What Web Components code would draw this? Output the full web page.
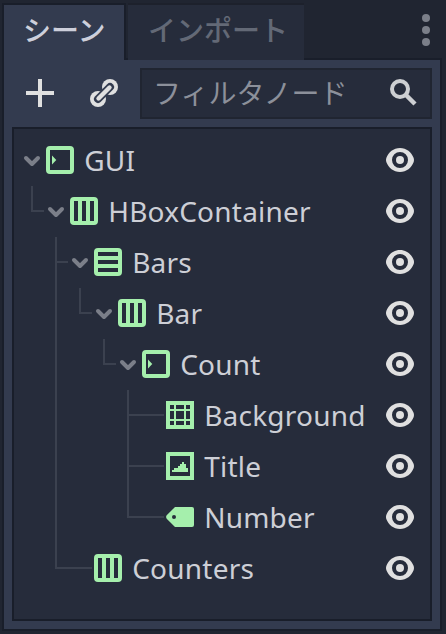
<!DOCTYPE html>
<html lang="ja">
<head>
<meta charset="utf-8">
<title>シーン</title>
<style>
html, body { margin: 0; height: 100%; background: #202531; }
body { font: 28px/1 "Noto Sans", "Noto Sans CJK JP", sans-serif; color: #cdcfd6; overflow: hidden; }
</style>
</head>
<body>
<scene-dock>
  <dock-tab slot="tabs" active>シーン</dock-tab>
  <dock-tab slot="tabs">インポート</dock-tab>
  <dock-icon slot="menu" name="menu"></dock-icon>
  <dock-icon slot="tools" name="add"></dock-icon>
  <dock-icon slot="tools" name="link"></dock-icon>
  <filter-box slot="tools">フィルタノード</filter-box>
  <tree-node label="GUI" icon="control" open root>
    <tree-node label="HBoxContainer" icon="hbox" open last>
      <tree-node label="Bars" icon="vbox" open>
        <tree-node label="Bar" icon="hbox" open last>
          <tree-node label="Count" icon="control" open last>
            <tree-node label="Background" icon="patch"></tree-node>
            <tree-node label="Title" icon="texture"></tree-node>
            <tree-node label="Number" icon="label" last></tree-node>
          </tree-node>
        </tree-node>
      </tree-node>
      <tree-node label="Counters" icon="hbox" last></tree-node>
    </tree-node>
  </tree-node>
</scene-dock>
<script>
const box = '<path fill="#a5efac" fill-rule="evenodd" d="M6 2h20a4 4 0 0 1 4 4v20a4 4 0 0 1-4 4H6a4 4 0 0 1-4-4V6a4 4 0 0 1 4-4z';
const ICONS = {
  control: box + 'M6 6v20h20V6z"/><path fill="#a5efac" d="M8 11.500l4.300 4.500L8 20.500z"/>',
  hbox: box + 'M6 6v20h4V6zM14 6v20h4V6zM22 6v20h4V6z"/>',
  vbox: box + 'M6 6v4h20V6zM6 14v4h20v-4zM6 22v4h20v-4z"/>',
  patch: '<path fill="#a5efac" fill-rule="evenodd" d="M2 2h28v28H2zM6 6v4h4V6zM12 6v4h8V6zM22 6v4h4V6zM6 12v8h4v-8zM12 12v8h8v-8zM22 12v8h4v-8zM6 22v4h4v-4zM12 22v4h8v-4zM22 22v4h4v-4z"/>',
  texture: '<path fill="#a5efac" fill-rule="evenodd" d="M2 2h28v28H2zM6 6v20h20V6z"/><path fill="#a5efac" d="M8 22v-2h2v-2h4v-2h2v-2h2v-2h2v2h2v4h2v4z"/>',
  label: '<path fill="#a5efac" fill-rule="evenodd" d="M11 6h17a2 2 0 0 1 2 2v16a2 2 0 0 1-2 2H11L2.700 17.700Q1.500 16 2.700 14.300zM10 14a2 2 0 1 0 0 4a2 2 0 0 0 0-4z"/>',
  eye: '<path fill="#e0e0e0" fill-rule="evenodd" d="M16 4C9.500 4 4.500 8.300 2.300 14Q1.700 16 2.300 18C4.500 23.700 9.500 28 16 28s11.500-4.300 13.700-10Q30.300 16 29.700 14C27.500 8.300 22.500 4 16 4zM16 8a8 8 0 1 1 0 16a8 8 0 0 1 0-16z"/><circle cx="16" cy="16" r="4" fill="#e0e0e0"/>',
  arrow: '<path fill="none" stroke="#7b7f89" stroke-width="4" stroke-linecap="round" stroke-linejoin="round" d="M10 14l6 6 6-6"/>',
  add: '<path fill="#e0e0e0" d="M14 2h4v12h12v4H18v12h-4V18H2v-4h12z"/>',
  link: '<g fill="#e0e0e0"><circle cx="10" cy="22" r="8"/><circle cx="22" cy="10" r="8"/></g><g fill="none" stroke-linecap="round"><path stroke="#333b4f" stroke-width="8" d="M10 22L22 10"/><path stroke="#e0e0e0" stroke-width="4.400" d="M10.500 21.500l11-11"/></g>',
  search: '<g fill="none" stroke="#cdcfd2" stroke-width="4"><circle cx="12" cy="12" r="8"/><path stroke-width="4.500" d="M17.500 17.500l9.500 9.500"/></g>',
  menu: '<g fill="#7b7f89"><circle cx="16" cy="4" r="4"/><circle cx="16" cy="16" r="4"/><circle cx="16" cy="28" r="4"/></g>'
};

customElements.define('dock-icon', class extends HTMLElement {
  connectedCallback() {
    this.attachShadow({ mode: 'open' }).innerHTML =
      `<style>:host{display:block;width:32px;height:32px;flex:none}svg{display:block}</style>
       <svg width="32" height="32" viewBox="0 0 32 32">${ICONS[this.getAttribute('name')]}</svg>`;
  }
});

customElements.define('dock-tab', class extends HTMLElement {
  connectedCallback() {
    this.attachShadow({ mode: 'open' }).innerHTML =
      `<style>
        :host{display:flex;box-sizing:border-box;width:176px;height:57px;margin-left:2px;padding:8px 0 0 20px;border-top:2px solid #1d212c;
          background:#262c3b;color:#636976;line-height:32px;white-space:nowrap;font-family:"Noto Sans CJK JP",sans-serif;font-weight:500}
        :host([active]){width:124px;margin-left:0;padding-left:19px;background:#333b4f;color:#cdcfdb;border:2px solid #191e2a;border-bottom:0}
      </style><slot></slot>`;
  }
});

customElements.define('filter-box', class extends HTMLElement {
  connectedCallback() {
    this.attachShadow({ mode: 'open' }).innerHTML =
      `<style>
        :host{display:flex;align-items:center;justify-content:space-between;box-sizing:border-box;flex:1;height:51px;
          margin-left:4px;padding:0 10px 0 11px;border:2px solid #202531;background:#262c3b;color:#8c909a;
          font-family:"Noto Sans CJK JP",sans-serif;white-space:nowrap}
        span{line-height:32px;padding-bottom:3px}
        dock-icon{margin-top:-1px}
      </style><span><slot></slot></span><dock-icon name="search"></dock-icon>`;
  }
});

customElements.define('tree-node', class extends HTMLElement {
  connectedCallback() {
    const open = this.hasAttribute('open');
    this.attachShadow({ mode: 'open' }).innerHTML =
      `<style>
        :host{display:block;position:relative}
        .row{display:flex;height:51px;padding:9px 14px 0 6px;box-sizing:border-box}
        .arrow{width:24px;display:flex;justify-content:center}
        .label{flex:1;margin-left:8.200px;line-height:32px;white-space:nowrap;letter-spacing:.22px}
        .kids{padding-left:24px}
        .v,.h{position:absolute;left:-7px;background:#3b414f}
        .v{top:0;bottom:0;width:2px}
        .h{top:24px;height:2px;width:${open ? 13 : 37}px}
        :host([last]) .v{bottom:auto;height:26px}
        :host([root]) .v,:host([root]) .h{display:none}
      </style>
      <i class="v"></i><i class="h"></i>
      <div class="row">
        <div class="arrow">${open ? '<dock-icon name="arrow"></dock-icon>' : ''}</div>
        <dock-icon name="${this.getAttribute('icon')}"></dock-icon>
        <div class="label">${this.getAttribute('label')}</div>
        <dock-icon name="eye"></dock-icon>
      </div>
      <div class="kids"><slot></slot></div>`;
  }
});

customElements.define('scene-dock', class extends HTMLElement {
  connectedCallback() {
    this.attachShadow({ mode: 'open' }).innerHTML =
      `<style>
        :host{display:flex;flex-direction:column;box-sizing:border-box;height:634px;padding:3px 4px 3px 2px;background:#202531}
        .tabs{display:flex;height:55px;flex:none}
        .menu{margin-left:auto;padding-top:11px;width:32px;display:flex}
        .panel{display:flex;flex-direction:column;flex:1;box-sizing:border-box;border:2px solid #191e2a;background:#333b4f;padding:8px}
        .tools{display:flex;gap:32px;height:51px;flex:none;padding-left:12px}
        .tools ::slotted(dock-icon){margin-top:9px}
        .tools ::slotted(filter-box){margin-left:-12px}
        .tree{flex:1;box-sizing:border-box;margin-top:8px;border:2px solid #191e2a;background:#262c3b;padding-top:6px}
        .tabs ::slotted(dock-tab){z-index:1}
      </style>
      <div class="tabs"><slot name="tabs"></slot><div class="menu"><slot name="menu"></slot></div></div>
      <div class="panel">
        <div class="tools"><slot name="tools"></slot></div>
        <div class="tree"><slot></slot></div>
      </div>`;
  }
});
</script>
</body>
</html>
